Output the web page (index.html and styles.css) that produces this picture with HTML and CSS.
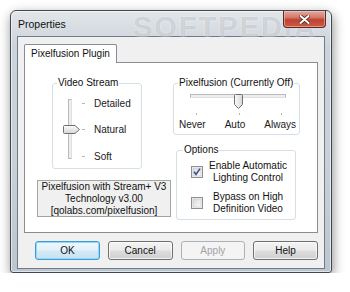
FILE: index.html
```html
<!DOCTYPE html>
<html lang="en">
<head>
    <meta charset="UTF-8">
    <title>Properties</title>
    <link rel="stylesheet" href="styles.css">
</head>
<body>
    <div class="window">
        <div class="titlebar">
            <span class="title">Properties</span>
            <span class="watermark">SOFTPEDIA</span>
            <button class="close" type="button">
                <svg width="11" height="9" viewBox="0 0 11 9">
                    <path d="M1.5 1 L9.5 8 M9.5 1 L1.5 8" stroke="#4b2520" stroke-width="3.6" stroke-linecap="round"/>
                    <path d="M1.5 1 L9.5 8 M9.5 1 L1.5 8" stroke="#fff" stroke-width="2" stroke-linecap="round"/>
                </svg>
            </button>
        </div>
        <div class="client">
            <div class="tabs">
                <div class="tab">Pixelfusion Plugin</div>
            </div>
            <div class="panel">
                <div class="col-left">
                    <fieldset class="group video">
                        <legend>Video Stream</legend>
                        <div class="vstream">
                            <div class="vslider">
                                <div class="vtrack"></div>
                                <svg class="vthumb" width="17" height="9" viewBox="0 0 17 9">
                                    <defs>
                                        <linearGradient id="tg1" x1="0" y1="0" x2="0" y2="1">
                                            <stop offset="0" stop-color="#fbfbfb"/>
                                            <stop offset="1" stop-color="#d6d6d6"/>
                                        </linearGradient>
                                    </defs>
                                    <path d="M0.5 1.5 Q0.5 0.5 1.5 0.5 H12 L16.5 4.5 L12 8.5 H1.5 Q0.5 8.5 0.5 7.5 Z" fill="url(#tg1)" stroke="#707070"/>
                                </svg>
                            </div>
                            <div class="vstops">
                                <div class="vstop"><span class="vtick"></span>Detailed</div>
                                <div class="vstop"><span class="vtick"></span>Natural</div>
                                <div class="vstop"><span class="vtick"></span>Soft</div>
                            </div>
                        </div>
                    </fieldset>
                    <div class="info">Pixelfusion with Stream+ V3<br>Technology v3.00<br>[qolabs.com/pixelfusion]</div>
                </div>
                <div class="col-right">
                    <fieldset class="group pf">
                        <legend>Pixelfusion (Currently Off)</legend>
                        <div class="hslider">
                            <div class="htrack"></div>
                            <svg class="hthumb" width="9" height="15" viewBox="0 0 9 15">
                                <defs>
                                    <linearGradient id="tg2" x1="0" y1="0" x2="1" y2="0">
                                        <stop offset="0" stop-color="#fbfbfb"/>
                                        <stop offset="1" stop-color="#d6d6d6"/>
                                    </linearGradient>
                                </defs>
                                <path d="M0.5 1.5 Q0.5 0.5 1.5 0.5 H7.5 Q8.5 0.5 8.5 1.5 V10.5 L4.5 14.5 L0.5 10.5 Z" fill="url(#tg2)" stroke="#707070"/>
                            </svg>
                        </div>
                        <div class="hticks"><span></span><span></span><span></span></div>
                        <div class="hlabels"><span>Never</span><span>Auto</span><span>Always</span></div>
                    </fieldset>
                    <fieldset class="group options">
                        <legend>Options</legend>
                        <div class="check-row">
                            <svg class="checkbox" width="12" height="12" viewBox="0 0 12 12">
                                <defs>
                                    <linearGradient id="cb" x1="0" y1="0" x2="1" y2="1">
                                        <stop offset="0" stop-color="#d8d8d8"/>
                                        <stop offset="1" stop-color="#fbfbfb"/>
                                    </linearGradient>
                                </defs>
                                <rect x="0.5" y="0.5" width="11" height="11" fill="#f4f4f4" stroke="#8f8f8f"/>
                                <rect x="2" y="2" width="8" height="8" fill="url(#cb)" stroke="#c4c4c4" stroke-width="0.6"/>
                                <path d="M3 5.8 L5 8.4 L9 2.6" fill="none" stroke="#3d4f8f" stroke-width="1.6"/>
                            </svg>
                            <span class="check-text">Enable Automatic Lighting Control</span>
                        </div>
                        <div class="check-row second">
                            <svg class="checkbox" width="12" height="12" viewBox="0 0 12 12">
                                <rect x="0.5" y="0.5" width="11" height="11" fill="#f4f4f4" stroke="#8f8f8f"/>
                                <rect x="2" y="2" width="8" height="8" fill="url(#cb)" stroke="#c4c4c4" stroke-width="0.6"/>
                            </svg>
                            <span class="check-text">Bypass on High Definition Video</span>
                        </div>
                    </fieldset>
                </div>
            </div>
            <div class="buttons">
                <button class="btn default" type="button">OK</button>
                <button class="btn" type="button">Cancel</button>
                <button class="btn" type="button" disabled>Apply</button>
                <button class="btn" type="button">Help</button>
            </div>
        </div>
    </div>
</body>
</html>
```

FILE: styles.css
```css
* {
    margin: 0;
    padding: 0;
    box-sizing: border-box;
}

body {
    font-family: 'Liberation Sans', Arial, sans-serif;
    font-size: 10px;
    color: #1a1a1a;
    background: #fff;
    padding: 10px 0 0 10px;
}

.window {
    width: 322px;
    height: 263px;
    border: 1px solid #3e4852;
    border-radius: 6px 6px 3px 3px;
    background: linear-gradient(#e2e6ea, #cdd3da 14%, #c8cfd7 60%, #bcc6cf);
    box-shadow: 1px 4px 12px rgba(0, 0, 0, 0.45), inset 0 0 0 1px rgba(255, 255, 255, 0.55);
    display: flex;
    flex-direction: column;
    padding: 0 6px 3px 6px;
}

.titlebar {
    position: relative;
    height: 25px;
    display: flex;
    justify-content: space-between;
    align-items: flex-start;
}

.title {
    font-size: 10.5px;
    color: #111;
    padding: 7px 0 0 1px;
}

.watermark {
    position: absolute;
    left: 116px;
    top: 0;
    font-size: 29px;
    font-weight: bold;
    letter-spacing: 2px;
    color: rgba(100, 108, 118, 0.24);
    text-shadow: 0 0 2px rgba(255, 255, 255, 0.6);
}

.close {
    position: relative;
    width: 43px;
    height: 17px;
    margin-right: -1px;
    border: 1px solid #5b2a23;
    border-top: none;
    border-radius: 0 0 4px 4px;
    background: linear-gradient(#e7a99d, #d17a6b 40%, #c0412f 55%, #cb5a45);
    box-shadow: inset 0 0 0 1px rgba(255, 210, 200, 0.5);
    display: flex;
    align-items: center;
    justify-content: center;
}

.client {
    flex: 1;
    background: #f0f0f0;
    border: 1px solid #6f7b87;
    padding: 7px 6px 0 6px;
}

.tabs {
    display: flex;
}

.tab {
    position: relative;
    height: 19px;
    margin-bottom: -1px;
    padding: 3px 6px 0 6px;
    border: 1px solid #898c95;
    border-bottom: none;
    border-radius: 2px 2px 0 0;
    background: #fff;
    color: #111;
}

.panel {
    display: flex;
    height: 171px;
    border: 1px solid #898c95;
    background: #fff;
}

.col-left {
    width: 146px;
    padding-left: 12px;
}

.col-right {
    width: 132px;
}

.group {
    border: 1px solid #d5dfe5;
    border-radius: 3px;
    padding: 0;
    min-width: 0;
    margin-top: 14px;
}

.group legend {
    margin-left: 4px;
    padding: 0 1px;
    line-height: 12px;
    color: #111;
}

.video {
    width: 90px;
    margin-left: 15px;
}

.vstream {
    display: flex;
    padding: 8px 0 6px 0;
}

.vslider {
    position: relative;
    width: 18px;
    height: 60px;
    margin: 2px 0 0 9px;
}

.vtrack {
    width: 4px;
    height: 60px;
    margin-left: 6px;
    background: #eceeee;
    border: 1px solid #b8bcbf;
    border-right-color: #dfe2e3;
}

.vthumb {
    position: absolute;
    left: 1px;
    top: 26px;
}

.vstops {
    display: flex;
    flex-direction: column;
    gap: 14.5px;
}

.vstop {
    display: flex;
    align-items: center;
    height: 12px;
}

.vtick {
    width: 3px;
    height: 1px;
    margin: 0 9px 0 2px;
    background: #b6b6b6;
}

.info {
    width: 134px;
    height: 37px;
    margin-top: 11px;
    border: 1px solid #a3a3a3;
    background: #f0f0f0;
    text-align: center;
    line-height: 12.2px;
    color: #111;
}

.pf {
    width: 127px;
    margin-left: 2px;
    padding-bottom: 3px;
}

.hslider {
    position: relative;
    width: 96px;
    height: 15px;
    margin: 3px 0 0 16px;
}

.htrack {
    height: 4px;
    margin-top: 5px;
    background: #eceeee;
    border: 1px solid #b8bcbf;
    border-bottom-color: #dfe2e3;
}

.hthumb {
    position: absolute;
    left: 44px;
    top: 0;
}

.hticks {
    display: flex;
    justify-content: space-between;
    height: 2px;
    margin-top: 4px;
    padding: 0 17px 0 22px;
}

.hticks span {
    width: 1px;
    background: #b6b6b6;
}

.hlabels {
    display: flex;
    justify-content: space-between;
    height: 12px;
    line-height: 12px;
    margin-top: 4px;
    padding: 0 3px 0 5px;
}

.options {
    width: 120px;
    margin: 9px 0 0 5px;
    padding: 4px 0 5px 0;
}

.options legend {
    margin-left: 6px;
}

.check-row {
    display: flex;
    align-items: center;
}

.check-row.second {
    margin-top: 8px;
}

.checkbox {
    flex: none;
    margin-left: 14px;
}

.check-text {
    width: 82px;
    margin-left: 4px;
    text-align: center;
    line-height: 11.5px;
    color: #111;
}

.buttons {
    display: flex;
    gap: 8px;
    margin-top: 8px;
    padding-left: 11px;
}

.btn {
    width: 65px;
    height: 19px;
    font-family: 'Liberation Sans', Arial, sans-serif;
    font-size: 10px;
    color: #111;
    border: 1px solid #707070;
    border-radius: 3px;
    background: linear-gradient(#f3f3f3, #ebebeb 48%, #dddddd 52%, #d0d0d0);
    box-shadow: inset 0 0 0 1px rgba(255, 255, 255, 0.7);
}

.btn.default {
    border-color: #3c9cd8;
    background: linear-gradient(#eef7fd, #e3f1fb 48%, #d4e9f6 52%, #c8e2f3);
    box-shadow: inset 0 0 0 1px #95d7f7;
}

.btn:disabled {
    color: #a2a2a2;
    border-color: #adb2b5;
    background: #f4f4f4;
    box-shadow: none;
}
```
